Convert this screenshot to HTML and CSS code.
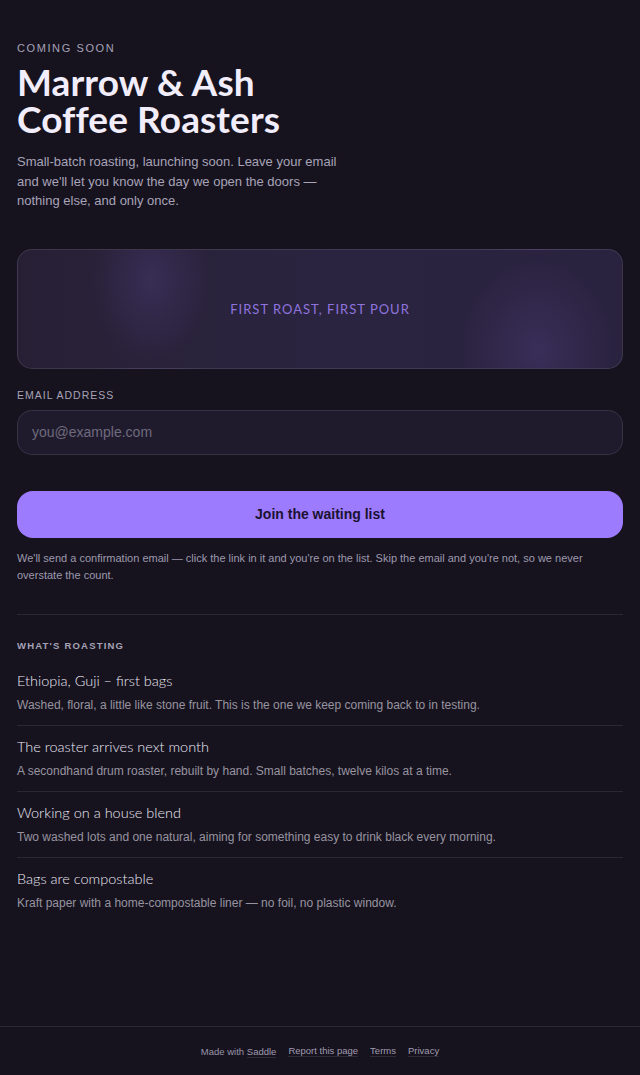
FILE: index.html
```html
<!DOCTYPE html>
<html lang="en">
<head>
<meta charset="UTF-8" />
<meta name="viewport" content="width=device-width, initial-scale=1.0" />
<title>Marrow &amp; Ash Coffee Roasters – Coming soon</title>
<link rel="stylesheet" href="styles.css">
</head>
<body>
<main class="page">
  <!-- intro -->
  <p class="eyebrow">Coming soon</p>
  <h1>Marrow &amp; Ash<br>Coffee Roasters</h1>
  <p class="lede">Small-batch roasting, launching soon. Leave your email and we'll let you know the day we open the doors — nothing else, and only once.</p>

  <div class="hero"><span>First roast, first pour</span></div>

  <!-- signup -->
  <form class="signup">
    <label for="email" class="field-label">Email address</label>
    <input type="email" id="email" placeholder="you@example.com" />
    <button type="submit">Join the waiting list</button>
    <p class="note">We'll send a confirmation email — click the link in it and you're on the list. Skip the email and you're not, so we never overstate the count.</p>
  </form>

  <!-- updates -->
  <section class="updates">
    <h2>What's roasting</h2>
    <ul>
      <li><h3>Ethiopia, Guji – first bags</h3><p>Washed, floral, a little like stone fruit. This is the one we keep coming back to in testing.</p></li>
      <li><h3>The roaster arrives next month</h3><p>A secondhand drum roaster, rebuilt by hand. Small batches, twelve kilos at a time.</p></li>
      <li><h3>Working on a house blend</h3><p>Two washed lots and one natural, aiming for something easy to drink black every morning.</p></li>
      <li><h3>Bags are compostable</h3><p>Kraft paper with a home-compostable liner — no foil, no plastic window.</p></li>
    </ul>
  </section>
</main>

<footer class="site-footer">
  <span>Made with <a href="#">Saddle</a></span>
  <a href="#">Report this page</a>
  <a href="#">Terms</a>
  <a href="#">Privacy</a>
</footer>
</body>
</html>
```

FILE: styles.css
```css
:root{--bg:#16131f;--text:#f1edfa;--muted:#a39eb2;--line:rgba(255,255,255,.09);--accent:#9d7bff;}
*{box-sizing:border-box;}
html,body{margin:0;}
body{
  font-family:"Liberation Sans",Arial,sans-serif;background:var(--bg);color:var(--muted);
  min-height:100vh;display:flex;flex-direction:column;
}
.page{flex:1;padding:42px 17px 60px;}

/* intro ---------------------------------------------------- */
.eyebrow{margin:0;font-size:11px;letter-spacing:1.6px;text-transform:uppercase;color:#a7a2b6;}
h1{
  margin:9px 0 0;font-family:Lato,"Open Sans",sans-serif;font-weight:700;
  font-size:37px;line-height:37px;color:var(--text);letter-spacing:.1px;
}
.lede{margin:15px 0 0;max-width:330px;font-size:13px;line-height:19.5px;color:#a8a3b7;}

/* hero ----------------------------------------------------- */
.hero{
  margin-top:38px;height:120px;border:1px solid rgba(255,255,255,.1);border-radius:15px;
  display:flex;align-items:center;justify-content:center;
  background:
    radial-gradient(ellipse 60px 85px at 22% 25%,rgba(80,62,125,.4),transparent),
    radial-gradient(ellipse 75px 90px at 86% 85%,rgba(80,62,125,.4),transparent),
    linear-gradient(90deg,#272035,#2b2440 50%,#2a2340);
}
.hero span{
  font-family:Lato,"Open Sans",sans-serif;font-size:13px;letter-spacing:1px;text-transform:uppercase;color:#8e74df;
}

/* signup --------------------------------------------------- */
.signup{display:flex;flex-direction:column;margin-top:20px;}
.field-label{font-size:10.5px;letter-spacing:1px;text-transform:uppercase;color:#a7a2b6;}
.signup input{
  margin-top:9px;height:45px;padding:0 14px;border-radius:15px;border:1px solid rgba(255,255,255,.1);
  background:#1f1b2d;color:var(--text);font-family:inherit;font-size:14px;
}
.signup input::placeholder{color:#6f6a7e;}
.signup button{
  margin-top:36px;height:47px;border:none;border-radius:16px;background:var(--accent);
  color:#1b1230;font-family:inherit;font-size:14px;font-weight:700;cursor:pointer;
}
.note{margin:12px 0 0;font-size:11px;line-height:17px;color:#9e99ad;}

/* updates -------------------------------------------------- */
.updates{margin-top:30px;border-top:1px solid var(--line);padding-top:25px;}
.updates h2{margin:0;font-size:9.5px;font-weight:700;letter-spacing:1.2px;text-transform:uppercase;color:#a7a2b6;}
.updates ul{list-style:none;margin:20px 0 0;padding:0;}
.updates li{padding:11px 0;border-bottom:1px solid var(--line);}
.updates li:first-child{padding-top:0;}
.updates li:last-child{border-bottom:none;}
.updates h3{margin:0;font-family:Lato,"Open Sans",sans-serif;font-weight:300;font-size:14.5px;line-height:20px;color:#ebe7f3;}
.updates p{margin:6px 0 0;font-size:12px;line-height:17px;color:#98939f;}

/* footer --------------------------------------------------- */
.site-footer{
  border-top:1px solid var(--line);height:49px;display:flex;justify-content:center;align-items:center;gap:12px;
  font-size:9.5px;color:#9994a7;
}
.site-footer a{color:#a19cb0;text-decoration:none;border-bottom:1px solid rgba(255,255,255,.1);}
```
